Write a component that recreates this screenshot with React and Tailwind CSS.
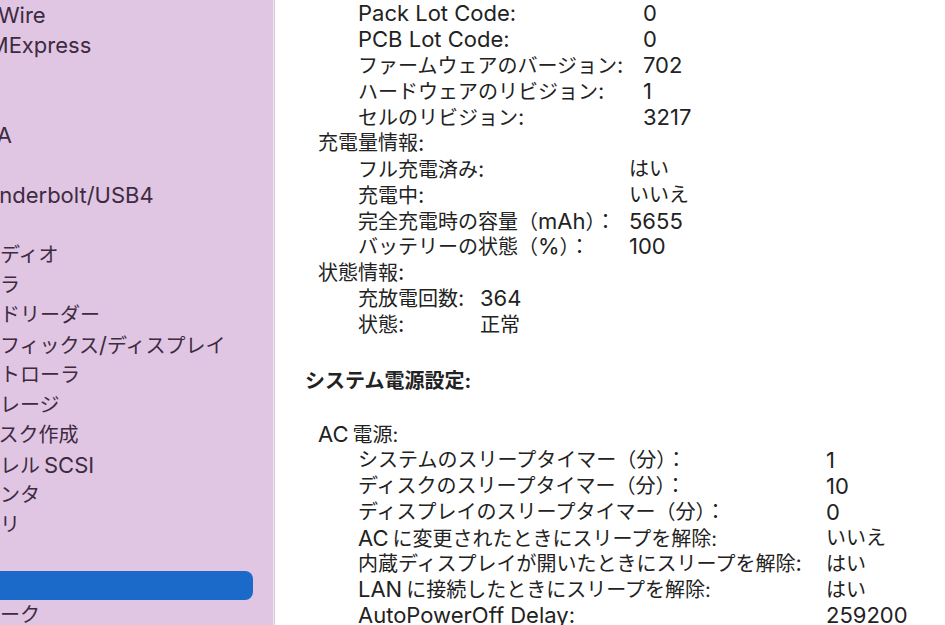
import React from "react";

const FONT = { fontFamily: "Inter, 'Noto Sans CJK JP', sans-serif" };

function mix(str) {
  if (typeof str !== "string") return str;
  const parts = str.split(/([\x21-\x7E](?:[\x20-\x7E]*[\x21-\x7E])?)/);
  return parts.map((p, i) =>
    i % 2 === 1 ? (
      <span key={i} className="text-[22px]">
        {p}
      </span>
    ) : (
      <React.Fragment key={i}>{p}</React.Fragment>
    )
  );
}

const Gap = () => <span className="inline-block w-[4px]" />;

const sidebarItems = [
  { t: "FireWire", off: 40 },
  { t: "NVMExpress", off: 43 },
  { t: "PCI", off: 40 },
  { t: "SAS", off: 47 },
  { t: "SATA", off: 43 },
  { t: "SPI", off: 40 },
  { t: "Thunderbolt/USB4", off: 41 },
  { t: "USB", off: 48 },
  { t: "オーディオ", off: 40 },
  { t: "カメラ", off: 40 },
  { t: "カードリーダー", off: 40 },
  { t: "グラフィックス/ディスプレイ", off: 40 },
  { t: "コントローラ", off: 40 },
  { t: "ストレージ", off: 40 },
  { t: "ディスク作成", off: 40 },
  { t: <>パラレル<Gap />{mix("SCSI")}</>, off: 40 },
  { t: "プリンタ", off: 40 },
  { t: "メモリ", off: 40 },
  { t: "診断", off: 42 },
  { t: "電源", off: 40, selected: true },
  { t: "ネットワーク", off: 80 },
];

function SidebarRow({ item }) {
  if (item.selected) {
    return (
      <div className="h-[30px] pt-[1px]">
        <div className="h-[29px] w-[253px] rounded-r-[8px] bg-[#1b69c9]" />
      </div>
    );
  }
  return (
    <div className="h-[30px] flex items-center whitespace-nowrap">
      <span style={{ marginLeft: -item.off }}>{mix(item.t)}</span>
    </div>
  );
}

function Row({ label, value, w }) {
  return (
    <div className="flex h-[25.9px] items-center whitespace-nowrap pl-[53px]">
      <div style={{ width: w }} className="shrink-0">
        {mix(label)}
      </div>
      <div>{mix(value)}</div>
    </div>
  );
}

function Group({ title, w, rows }) {
  return (
    <div>
      {title && (
        <div className="flex h-[25.9px] items-center whitespace-nowrap pl-[13px]">
          {mix(title)}
        </div>
      )}
      {rows.map(([l, v], i) => (
        <Row key={i} label={l} value={v} w={w} />
      ))}
    </div>
  );
}

export default function App() {
  return (
    <div
      className="flex h-[625px] w-[945px] overflow-hidden bg-white text-[20px]"
      style={FONT}
    >
      <div className="w-[273px] shrink-0 overflow-hidden bg-[#e1c6e3] text-[#3d2b41]">
        {sidebarItems.map((it, i) => (
          <SidebarRow key={i} item={it} />
        ))}
      </div>
      <div className="w-[1px] shrink-0 bg-[#f1e3f1]" />
      <div className="w-[1px] shrink-0 bg-[#d9c8da]" />
      <div className="flex-1 overflow-hidden pl-[30px] pt-[1px] text-[#222222]">
        <Group
          w={285}
          rows={[
            ["Pack Lot Code:", "0"],
            ["PCB Lot Code:", "0"],
            ["ファームウェアのバージョン:", "702"],
            ["ハードウェアのリビジョン:", "1"],
            ["セルのリビジョン:", "3217"],
          ]}
        />
        <Group
          title="充電量情報:"
          w={271}
          rows={[
            ["フル充電済み:", "はい"],
            ["充電中:", "いいえ"],
            ["完全充電時の容量（mAh）：", "5655"],
            ["バッテリーの状態（%）：", "100"],
          ]}
        />
        <Group
          title="状態情報:"
          w={122}
          rows={[
            ["充放電回数:", "364"],
            ["状態:", "正常"],
          ]}
        />
        <div className="mt-[30px] flex h-[26px] items-center whitespace-nowrap font-bold">
          システム電源設定:
        </div>
        <div className="mt-[28px]">
          <Group
            title={<span>{mix("AC")}<Gap />電源:</span>}
            w={468}
            rows={[
              ["システムのスリープタイマー（分）：", "1"],
              ["ディスクのスリープタイマー（分）：", "10"],
              ["ディスプレイのスリープタイマー（分）：", "0"],
              [<span>{mix("AC")}<Gap />に変更されたときにスリープを解除:</span>, "いいえ"],
              ["内蔵ディスプレイが開いたときにスリープを解除:", "はい"],
              [<span>{mix("LAN")}<Gap />に接続したときにスリープを解除:</span>, "はい"],
              ["AutoPowerOff Delay:", "259200"],
            ]}
          />
        </div>
      </div>
    </div>
  );
}
